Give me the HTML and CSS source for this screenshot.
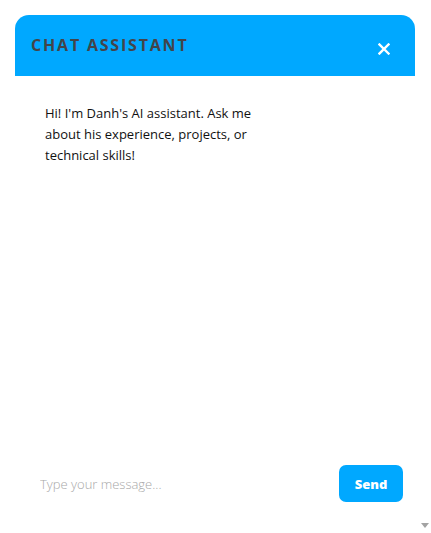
FILE: index.html
```html
<!DOCTYPE html>
<html lang="en">
<head>
<meta charset="utf-8">
<title>Chat Assistant</title>
<link rel="stylesheet" href="styles.css">
</head>
<body>
<div class="page">
  <section class="chat">
    <header class="chat-header">
      <h2 class="chat-title">CHAT ASSISTANT</h2>
      <button class="chat-close" aria-label="Close">
        <svg width="12" height="12" viewBox="0 0 12 12"><path d="M1.5 1.5 L10.5 10.5 M10.5 1.5 L1.5 10.5" stroke="#fff" stroke-width="2.4" stroke-linecap="square"/></svg>
      </button>
    </header>
    <div class="chat-messages">
      <div class="msg">Hi! I'm Danh's AI assistant. Ask me about his experience, projects, or technical skills!</div>
    </div>
    <form class="chat-input">
      <input class="chat-field" type="text" placeholder="Type your message...">
      <button class="chat-send" type="button">Send</button>
    </form>
  </section>
</div>
<div class="scroll-arrow"></div>
</body>
</html>
```
FILE: styles.css
```css
html, body {
  margin: 0;
  padding: 0;
  background: #fff;
  overflow: hidden;
}
body {
  width: 431px;
  height: 533px;
  position: relative;
  font-family: "Open Sans", "Noto Sans", sans-serif;
}
.page {
  padding: 15px 16px 0 15px;
}
.chat {
  width: 400px;
  display: flex;
  flex-direction: column;
  height: 487px;
}
.chat-header {
  background: #00a8ff;
  border-radius: 14px 14px 0 0;
  height: 61px;
  display: flex;
  align-items: flex-start;
  justify-content: space-between;
  padding: 0 25px 0 16px;
  box-sizing: border-box;
}
.chat-title {
  margin: 20px 0 0 0;
  font-family: "Open Sans", sans-serif;
  font-weight: 700;
  font-size: 16px;
  letter-spacing: 1.8px;
  color: #444449;
  line-height: 20px;
}
.chat-close {
  margin-top: 28px;
  background: none;
  border: 0;
  padding: 0;
  width: 12px;
  height: 12px;
  display: block;
  line-height: 0;
}
.chat-messages {
  flex: 1;
  padding: 27px 30px 0 30px;
}
.msg {
  max-width: 230px;
  font-size: 13px;
  line-height: 21px;
  color: #111;
}
.chat-input {
  display: flex;
  align-items: center;
  padding: 0 12px 0 25px;
  height: 37px;
  margin-bottom: 0;
}
.chat-field {
  flex: 1;
  border: 0;
  outline: none;
  font-family: "Open Sans", sans-serif;
  font-size: 13px;
  font-weight: 300;
  color: #333;
  background: transparent;
  padding: 0;
}
.chat-field::placeholder {
  color: #a8a8a8;
}
.chat-send {
  width: 64px;
  height: 37px;
  background: #00a8ff;
  border: 0;
  border-radius: 7px;
  color: #fff;
  font-family: "Open Sans", sans-serif;
  font-weight: 800;
  font-size: 13px;
}
.scroll-arrow {
  position: absolute;
  right: 2px;
  bottom: 5px;
  width: 0;
  height: 0;
  border-left: 4px solid transparent;
  border-right: 4px solid transparent;
  border-top: 5px solid #a3a3a3;
}
```
